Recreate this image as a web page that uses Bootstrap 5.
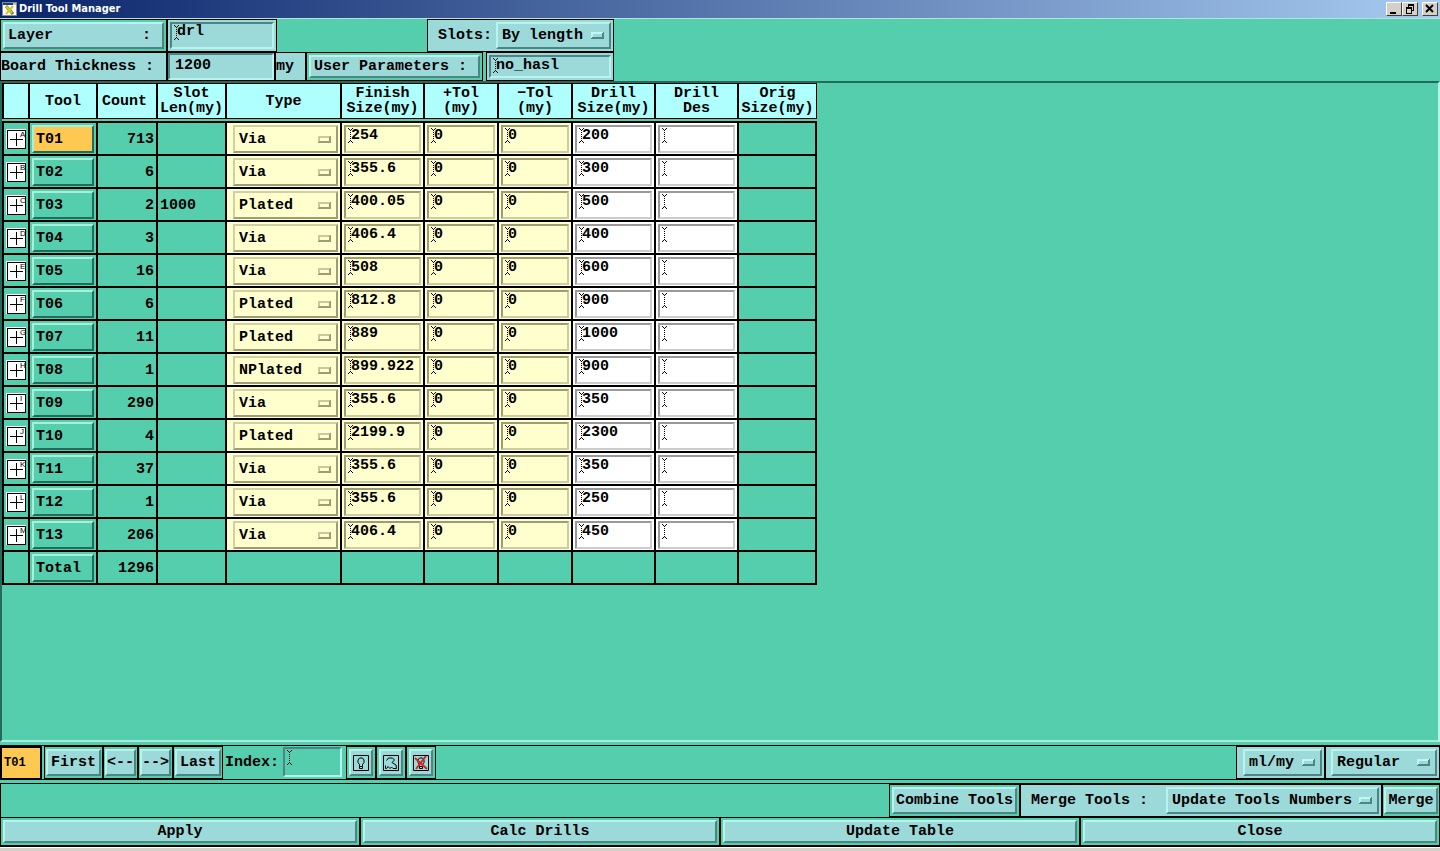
<!DOCTYPE html>
<html lang="en">
<head>
<meta charset="utf-8">
<meta name="viewport" content="width=device-width, initial-scale=1">
<title>Drill Tool Manager</title>
<link href="https://cdn.jsdelivr.net/npm/bootstrap@5.3.0/dist/css/bootstrap.min.css" rel="stylesheet">
<style>
:root{--teal:#55ceae;--cyan:#9cdada;--hi:#b9f3ee;--lo:#4d8584;--cream:#ffffce}
body{font:bold 15px/15px "Liberation Mono",monospace;color:#000;background:var(--teal)}
button,input,select{font:inherit;color:inherit;border-radius:0;margin:0}
.titlebar{height:18px;background:linear-gradient(90deg,#0a246a,#a6caf0);padding:0 2px;color:#fff}
.titlebar h1{font:bold 11px/18px "DejaVu Sans Condensed","Noto Sans",sans-serif;margin:0;padding-left:2px}
.winbtn{width:16px;height:14px;padding:0;background:#d4d0c8;border:1px solid;border-color:#fff #404040 #404040 #fff}
.winbtn svg,.iconbtn svg,.mark-icon{display:block}
.toolbar{border-top:1px solid #b5e3d5}
.line1{height:33px}
.line2{height:29px}
.cell{border:1px solid #000;padding:2px;display:flex;align-items:center}
.cell.pale{background:var(--cyan)}
.raised{border:2px solid;border-color:var(--hi) var(--lo) var(--lo) var(--hi);background:var(--cyan);padding:0 3px;text-align:center;white-space:nowrap}
.cell>.raised{height:100%}
.sunk{border:2px solid;border-color:var(--lo) var(--hi) var(--hi) var(--lo);background-color:var(--cyan);padding:0 0 8px 5px;min-width:0;width:100%;height:100%;outline:0}
.line2 .sunk{padding-bottom:3px}
.ibeam{background-repeat:no-repeat;background-position:2px 1px;background-image:url("data:image/svg+xml,%3Csvg xmlns='http://www.w3.org/2000/svg' width='5' height='15' shape-rendering='crispEdges'%3E%3Cpath d='M0 0h1v1H0zM4 0h1v1H4zM1 1h1v1H1zM3 1h1v1H3zM2 2h1v1H2zM2 4h1v1H2zM2 6h1v1H2zM2 8h1v1H2zM2 10h1v1H2zM2 12h1v1H2zM1 13h1v1H1zM3 13h1v1H3zM0 14h1v1H0zM4 14h1v1H4z'/%3E%3C/svg%3E")}
.picker{appearance:none;text-align:left;padding:0 24px 0 4px;background-repeat:no-repeat;background-position:right 5px center;background-image:url("data:image/svg+xml,%3Csvg xmlns='http://www.w3.org/2000/svg' width='13' height='7' shape-rendering='crispEdges'%3E%3Cpath fill='%234d8584' d='M0 0h13v7H0z'/%3E%3Cpath fill='%23c4f5f0' d='M0 0h12l-2 2v3H2L0 6z'/%3E%3Cpath fill='%239cdada' d='M2 2h9v3H2z'/%3E%3C/svg%3E")}
.w-lead{width:167px}.w-field{width:110px}.w-thick{width:108px}.w-slots{width:187px}.w-param{width:177px}.w-value{width:128px;margin-left:3px}
.my-unit{width:31px}
.gap-slots{margin-left:150px}
#slots{width:115px}
.panel{border:2px solid;border-color:#256b5c #b9f3e6 #a4eedb #256b5c;overflow:auto}
.tools{table-layout:fixed;border-collapse:separate;border-spacing:0;width:815px}
.tools th{height:36px;background:#afffff;border:1px solid #000;border-width:1px 2px 1px 0;text-align:center;padding:0;vertical-align:middle;font-weight:bold;white-space:nowrap}
.tools th:first-child{border-left-width:2px}
.tools th:last-child{border-right-width:1px}
.tools tbody::before{content:"";display:block;height:2px}
.tools td{height:33px;padding:2px 2px 1px;border:0 solid #000;border-width:0 2px 2px 0;line-height:15px;vertical-align:middle}
.tools td:first-child{border-left-width:2px}
.tools tbody tr:first-child td{border-top-width:2px;height:35px}
.tools .raised,.tools .sunk{display:block;width:100%;height:28px}
.tools .tool{background:transparent;border-color:#a9f0dc #256b5c #256b5c #a9f0dc;text-align:left;padding:0 2px}
.tools .tool.current{background:#ffc850}
.tools td.kind{background:var(--cream);padding-left:6px}
.tools .kind .picker{background-color:var(--cream);border-color:#d0cfa6 #9d9c75 #9d9c75 #d0cfa6;background-image:url("data:image/svg+xml,%3Csvg xmlns='http://www.w3.org/2000/svg' width='13' height='7' shape-rendering='crispEdges'%3E%3Cpath fill='%239d9c75' d='M0 0h13v7H0z'/%3E%3Cpath fill='%23c9c89f' d='M0 0h12l-2 2v3H2L0 6z'/%3E%3Cpath fill='%23ffffce' d='M2 2h9v3H2z'/%3E%3C/svg%3E")}
.tools td.cream{background:var(--cream)}
.tools td.blank{background:#fff}
.tools .sunk{background-color:transparent}
.cream .sunk{border-color:#9d9c75 #cccba3 #cccba3 #9d9c75}
.blank .sunk{border-color:#999 #ccc #ccc #999}
.strip{height:35px;border:1px solid #000;border-width:1px 0;margin-top:3px}
.strip .cell,.merge .cell{height:100%}
.now{background:#ffc850;font-size:12px;width:42px;margin-right:2px;border-width:2px 2px 1px}
.nav-cell{padding:2px 1px;width:35px}
.nav-cell.wide{width:59px}
.nav-cell.mid{width:50px}
.nav-cell .raised{width:100%;padding:0}
.index-label{padding:0 2px}
.index-box{width:59px;padding:1px 0 2px;margin:0 4px 0 2px}
.index-box .sunk{background-color:transparent}
.icon-cell{width:30px}
.iconbtn{width:100%;padding:0 1px}
.units{width:89px;padding-left:6px}
.mode{width:115px;padding-left:5px}
.merge{height:34px;border:1px solid #000;border-width:1px 0 0 1px;margin-top:3px}
.combine{width:131px}
.mergeby{width:362px}
#mergeby{width:213px}
.merge-go{width:58px;padding:2px 1px}
.merge-go .raised,.combine .raised{padding:0}
.actions .cell{flex:1 1 0;height:30px;border-bottom-width:2px}
.baseline{height:4px;background:#d4d0c8;border-top:1px solid #fff}
</style>
</head>
<body>
<div class="d-flex flex-column min-vh-100">
  <header class="titlebar d-flex align-items-center">
    <svg width="15" height="14" viewBox="0 0 15 14" aria-hidden="true"><path fill="#fff" stroke="#8a8a96" d="M.5.5h14v13H.5z"/><path fill="#1a3c8c" d="M1 1h10v2H1z"/><path fill="#c8c4c0" d="M11 1h3v2h-3z"/><path stroke="#77771c" stroke-width="3" d="M4 4l7 8"/><path stroke="#cfc72a" stroke-width="2" d="M11 4l-7 8M4 4l6 7"/></svg>
    <h1 class="flex-grow-1">Drill Tool Manager</h1>
    <button class="winbtn" aria-label="Minimize"><svg width="14" height="12"><path d="M3 9h6v2H3z"/></svg></button>
    <button class="winbtn" aria-label="Restore"><svg width="14" height="12" fill="none" stroke="#000" shape-rendering="crispEdges"><path d="M5 2.500h6M5 1.500h6M5.500 1v3M10.500 1v6.500H9M3 5.500h5M3 4.500h5v5.500H3.500V4"/></svg></button>
    <button class="winbtn ms-1" aria-label="Close"><svg width="14" height="12" stroke="#000" stroke-width="2"><path d="M3 2l7 7M10 2l-7 7"/></svg></button>
  </header>

  <div class="toolbar">
    <div class="line1 d-flex">
      <div class="cell w-lead"><button class="raised w-100 d-flex justify-content-between align-items-center" id="layer"><span>Layer</span><span class="pe-2">:</span></button></div>
      <div class="cell pale w-field"><input class="sunk ibeam" value="drl" aria-labelledby="layer"></div>
      <div class="cell pale w-slots gap-slots"><label for="slots" class="ps-2 me-auto">Slots:</label><select id="slots" class="raised picker"><option>By length</option></select></div>
    </div>
    <div class="line2 d-flex">
      <label class="cell pale w-lead ps-0" for="thick">Board Thickness :</label>
      <div class="cell pale p-0 w-thick border-2 border-black"><input class="sunk" id="thick" value="1200"></div>
      <div class="cell pale ps-0 my-unit">my</div>
      <div class="cell w-param"><button class="raised w-100 text-start" id="params">User Parameters :</button></div>
      <div class="cell pale w-value"><input class="sunk ibeam" value="no_hasl" aria-labelledby="params"></div>
    </div>
  </div>

  <main class="panel flex-grow-1">
    <table class="tools">
      <colgroup><col style="width:28px"><col style="width:68px"><col style="width:60px"><col style="width:69px"><col style="width:115px"><col style="width:83px"><col style="width:74px"><col style="width:74px"><col style="width:83px"><col style="width:83px"><col style="width:78px"></colgroup>
      <thead><tr><th></th><th>Tool</th><th class="text-start ps-1">Count</th><th>Slot<br>Len(my)</th><th>Type</th><th>Finish<br>Size(my)</th><th>+Tol<br>(my)</th><th>−Tol<br>(my)</th><th>Drill<br>Size(my)</th><th>Drill<br>Des</th><th>Orig<br>Size(my)</th></tr></thead>
      <tbody id="rows"></tbody>
    </table>
  </main>

  <div class="strip d-flex">
    <div class="cell now">T01</div>
    <div class="cell nav-cell wide"><button class="raised">First</button></div>
    <div class="cell nav-cell"><button class="raised">&lt;--</button></div>
    <div class="cell nav-cell"><button class="raised">--&gt;</button></div>
    <div class="cell nav-cell mid"><button class="raised">Last</button></div>
    <label for="index" class="index-label align-self-center">Index:</label>
    <div class="index-box"><input id="index" class="sunk ibeam"></div>
    <div class="cell icon-cell"><button class="raised iconbtn" aria-label="Highlight"><svg class="mx-auto" width="16" height="16" fill="none" stroke="#000"><path d="M.5.5h15v15H.5z"/><path d="M6.500 11.500V9.500L5 7.500V5l1.500-2h3L11 5v2.500l-1.500 2v2M6.500 11.500h3v2h-3z"/></svg></button></div>
    <div class="cell icon-cell"><button class="raised iconbtn" aria-label="Zoom to tool"><svg class="mx-auto" width="16" height="16" fill="none" stroke="#000"><path d="M.5.5h15v15H.5z"/><path d="M3.500 5.500l2-2.500h4l2 2-2.500 2.500 4 2.500.5 3.500M2.500 10.500v3h1l1.500-2 2 2 1.500-1.500 1.500 1.500h3.500"/></svg></button></div>
    <div class="cell icon-cell"><button class="raised iconbtn" aria-label="Clear highlight"><svg class="mx-auto" width="16" height="16" fill="none" stroke="#000"><path d="M.5.5h15v15H.5z"/><path d="M6.500 11.500V9.500L5 7.500V5l1.500-2h3L11 5v2.500l-1.500 2v2M6.500 11.500h3v2h-3z"/><path stroke="#e02020" stroke-width="2" d="M2 3l12 11M13 1L3 14"/></svg></button></div>
    <div class="cell pale units ms-auto"><select class="raised picker w-100" aria-label="Units"><option>ml/my</option></select></div>
    <div class="cell pale mode"><select class="raised picker w-100" aria-label="Display mode"><option>Regular</option></select></div>
  </div>

  <div class="merge d-flex justify-content-end">
    <div class="cell combine"><button class="raised w-100">Combine Tools</button></div>
    <div class="cell pale mergeby"><label for="mergeby" class="ps-2 me-auto">Merge Tools :</label><select id="mergeby" class="raised picker"><option>Update Tools Numbers</option></select></div>
    <div class="cell merge-go"><button class="raised w-100">Merge</button></div>
  </div>

  <div class="actions d-flex">
    <div class="cell"><button class="raised w-100">Apply</button></div>
    <div class="cell"><button class="raised w-100">Calc Drills</button></div>
    <div class="cell"><button class="raised w-100">Update Table</button></div>
    <div class="cell"><button class="raised w-100">Close</button></div>
  </div>
  <div class="baseline"></div>
</div>
<script src="https://cdn.jsdelivr.net/npm/bootstrap@5.3.0/dist/js/bootstrap.bundle.min.js"></script>
<script>
const tools = [
  [713,'','Via','254','200'],[6,'','Via','355.6','300'],[2,'1000','Plated','400.05','500'],
  [3,'','Via','406.4','400'],[16,'','Via','508','600'],[6,'','Plated','812.8','900'],
  [11,'','Plated','889','1000'],[1,'','NPlated','899.922','900'],[290,'','Via','355.6','350'],
  [4,'','Plated','2199.9','2300'],[37,'','Via','355.6','350'],[1,'','Via','355.6','250'],
  [206,'','Via','406.4','450']
];
const field = (kind, name, value) => `<td class="${kind}"><input class="sunk ibeam" aria-label="${name}" value="${value}"></td>`;
const kinds = ['Via','Plated','NPlated'];
document.getElementById('rows').innerHTML = tools.map(([count, slot, type, finish, drill], i) => {
  const id = 'T' + String(i + 1).padStart(2, '0');
  const letter = String.fromCharCode(65 + i);
  return `<tr>
    <td><svg class="mark-icon" width="20" height="20" shape-rendering="crispEdges"><path fill="#fff" d="M0 0h20v20H0z"/><path fill="none" stroke="#000" d="M1.500 1.500h18v18h-18zM10.500 4v13M4 10.500h13"/><text x="14" y="8" font-size="8" font-weight="normal" font-family="Liberation Sans">${letter}</text></svg></td>
    <td><button class="raised tool${i ? '' : ' current'}">${id}</button></td>
    <td class="text-end">${count}</td><td>${slot}</td>
    <td class="kind"><select class="raised picker" aria-label="${id} type">${kinds.map(k => `<option${k === type ? ' selected' : ''}>${k}</option>`).join('')}</select></td>
    ${field('cream', id + ' finish size', finish)}${field('cream', id + ' plus tolerance', '0')}${field('cream', id + ' minus tolerance', '0')}${field('blank', id + ' drill size', drill)}${field('blank', id + ' drill designation', '')}<td></td></tr>`;
}).join('') + `<tr><td></td><td><button class="raised tool">Total</button></td><td class="text-end">1296</td>${'<td></td>'.repeat(8)}</tr>`;
</script>
</body>
</html>
